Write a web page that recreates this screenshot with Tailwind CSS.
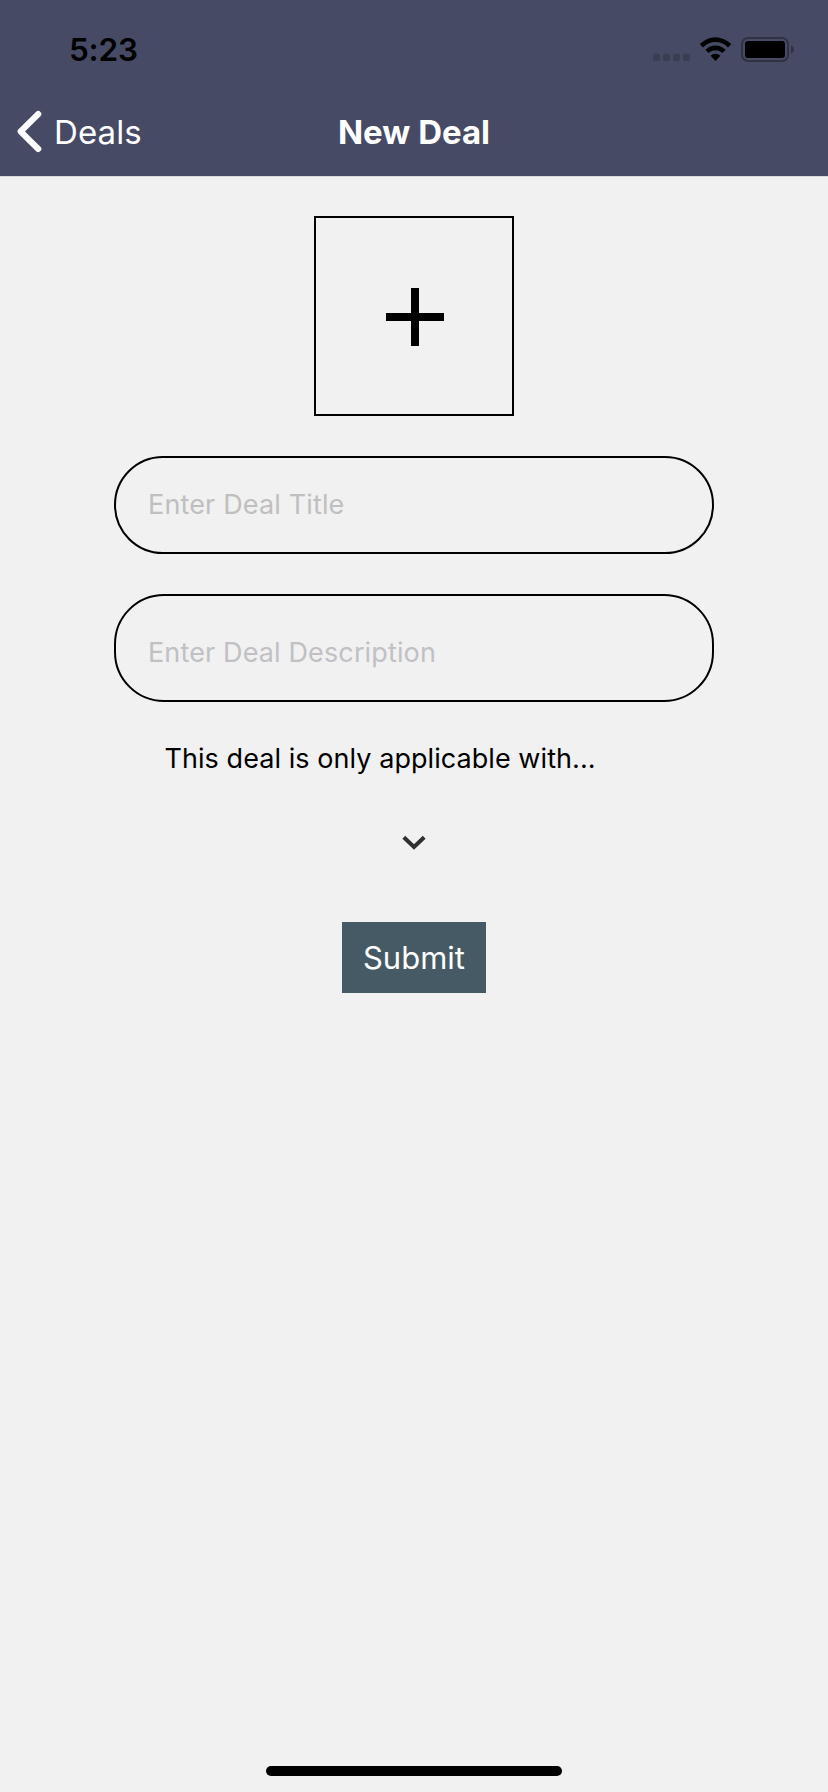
<!DOCTYPE html>
<html lang="en">
<head>
<meta charset="utf-8">
<title>New Deal</title>
<script src="https://cdn.jsdelivr.net/npm/@tailwindcss/browser@4"></script>
</head>
<body class="flex h-[1792px] w-[828px] flex-col bg-[#f1f1f1] font-['Inter','Liberation_Sans',sans-serif] text-black">
<header class="flex h-[177px] flex-col border-b border-[#d9d9dc] bg-[#464a64]">
  <div class="flex h-[88px] justify-between pl-[69px] pr-[34px]">
    <span class="mt-[30px] text-[31.5px] leading-10 font-semibold tracking-[-0.2px]">5:23</span>
    <svg class="mt-5" width="142" height="60" viewBox="652 20 142 60">
      <g fill="#3a3e52">
        <rect x="653" y="53.7" width="7" height="7.3" rx="2"/><rect x="663" y="53.7" width="7" height="7.3" rx="2"/><rect x="673" y="53.7" width="7" height="7.3" rx="2"/><rect x="683" y="53.7" width="7" height="7.3" rx="2"/>
      </g>
      <path d="M699.7 44.1 C709 34.8 722 34.8 731.3 44.1 L728 47.4 C720.6 40.2 710.4 40.2 703 47.4 Z"/>
      <path d="M705.3 49.8 C711.3 43.9 719.7 43.9 725.7 49.8 L722.3 53.1 C718.4 49.4 712.6 49.4 708.7 53.1 Z"/>
      <path d="M710.6 55.8 C713.5 53.1 717.5 53.1 720.4 55.8 L715.5 61 Z"/>
      <rect x="742" y="38" width="46" height="23" rx="6" fill="none" stroke="#2f3243" stroke-width="2"/>
      <rect x="745" y="41" width="40" height="17" rx="3"/>
      <path d="M791 45.5 Q794 46.7 794 49.5 Q794 52.3 791 53.5 Z" fill="#2f3243"/>
    </svg>
  </div>
  <nav class="grid h-[88px] grid-cols-3">
    <div class="flex pl-4">
      <svg class="mt-[21px]" width="28" height="46" viewBox="0 0 28 46"><path d="M22.3 5 L4.6 22.5 L22.3 40" fill="none" stroke="#fff" stroke-width="6" stroke-linecap="round" stroke-linejoin="round"/></svg>
      <span class="ml-[10px] mt-[24px] text-[33px] leading-10 tracking-[0.1px] text-white">Deals</span>
    </div>
    <h1 class="mt-[24px] text-center text-[33px] leading-10 font-bold whitespace-nowrap text-white">New Deal</h1>
  </nav>
</header>
<main class="flex flex-1 flex-col items-center">
  <button class="mt-[39px] size-[200px] border-2 border-black" aria-label="Add image">
    <svg class="size-[196px]" viewBox="0 0 196 196"><path d="M95 70h8v58h-8zM70 95h58v8H70z"/></svg>
  </button>
  <div class="mt-10 flex h-[98px] w-[600px] items-center rounded-[50px] border-2 border-black pl-8 text-[27px] leading-10 tracking-[0.15px] text-[#bfbfbf]"><span class="whitespace-nowrap">Enter Deal Title</span></div>
  <div class="mt-10 flex h-[108px] w-[600px] items-center rounded-[50px] border-2 border-black pl-8 pt-2.5 text-[27px] leading-10 tracking-[0.13px] text-[#c0c0c5]"><span class="whitespace-nowrap">Enter Deal Description</span></div>
  <p class="mt-[37px] w-[499px] text-[27px] leading-10 tracking-[0.06px] whitespace-nowrap">This deal is only applicable with...</p>
  <svg class="mt-[54px]" width="28" height="22" viewBox="0 0 28 22"><path d="M3.8 4.2 L14 13.9 L24.2 4.2" fill="none" stroke="#303030" stroke-width="4"/></svg>
  <button class="mt-[67px] h-[71px] w-36 bg-[#465a65] text-[31px] leading-10 text-white">Submit</button>
  <div class="mt-auto mb-4 h-2.5 w-[296px] rounded-full bg-black"></div>
</main>
</body>
</html>
